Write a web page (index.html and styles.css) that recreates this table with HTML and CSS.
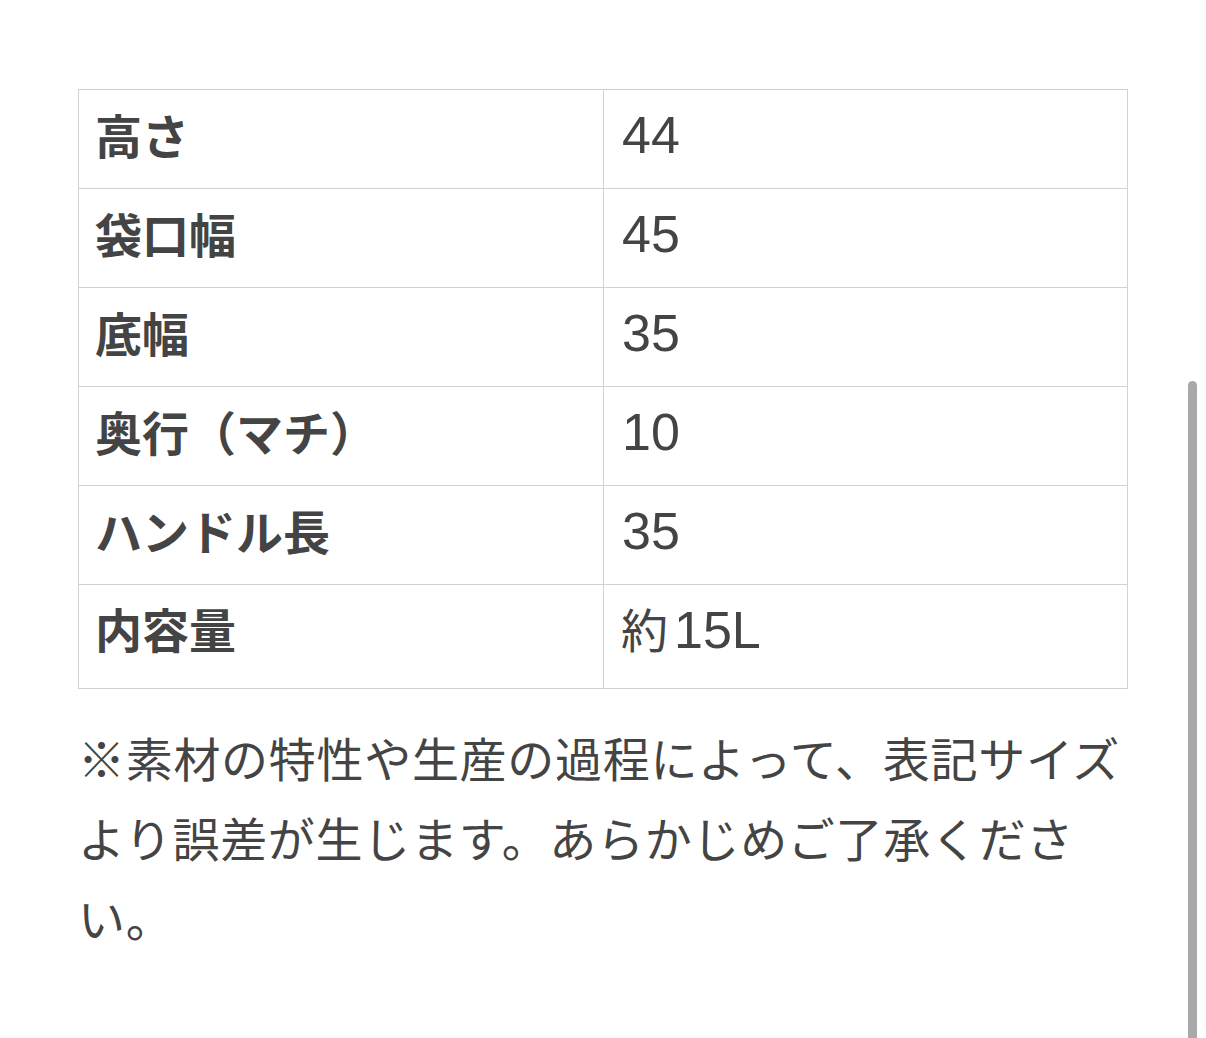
FILE: index.html
```html
<!DOCTYPE html>
<html lang="ja">
<head>
<meta charset="utf-8">
<link rel="stylesheet" href="styles.css">
</head>
<body>
<div class="page">
  <table class="spec">
    <tbody>
      <tr><th>高さ</th><td><span class="num">44</span></td></tr>
      <tr><th>袋口幅</th><td><span class="num">45</span></td></tr>
      <tr><th>底幅</th><td><span class="num">35</span></td></tr>
      <tr><th>奥行（マチ）</th><td><span class="num">10</span></td></tr>
      <tr><th>ハンドル長</th><td><span class="num">35</span></td></tr>
      <tr class="last"><th>内容量</th><td>約<span class="num num-after">15L</span></td></tr>
    </tbody>
  </table>
  <p class="note">※素材の特性や生産の過程によって、表記サイズより誤差が生じます。あらかじめご了承ください。</p>
</div>
<div class="scrollbar"></div>
</body>
</html>
```

FILE: styles.css
```css
html, body {
  margin: 0;
  padding: 0;
  background: #ffffff;
  overflow: hidden;
}
body {
  width: 1206px;
  height: 1038px;
  font-family: "Noto Sans CJK JP", "Noto Sans", sans-serif;
  color: #444444;
}
.page {
  padding: 89px 0 0 78px;
  width: 1050px;
}
.spec {
  width: 1050px;
  border-collapse: collapse;
  table-layout: fixed;
}
.spec th,
.spec td {
  border: 1px solid #d2d2d2;
  height: 99px;
  padding: 0 0 8px 16px;
  box-sizing: border-box;
  font-size: 47px;
  line-height: 1;
  text-align: left;
  vertical-align: middle;
}
.spec th {
  font-weight: 700;
  width: 525px;
  padding-bottom: 12px;
}
.spec td {
  font-weight: 400;
  padding-left: 17px;
}
.num {
  font-family: "Liberation Sans", "Noto Sans", sans-serif;
  font-size: 52px;
  margin-left: 1px;
}
.num-after {
  margin-left: 6px;
}
.spec .last th {
  height: 104px;
  padding-bottom: 18px;
}
.spec .last td {
  height: 104px;
  padding-bottom: 14px;
}
.note {
  margin: 28px 0 0 0;
  width: 1050px;
  font-size: 47px;
  line-height: 80px;
  letter-spacing: 0.7px;
  color: #444444;
}
.scrollbar {
  position: absolute;
  left: 1188px;
  top: 381px;
  width: 9px;
  height: 680px;
  border-radius: 5px;
  background: #a9a9a9;
}
```
